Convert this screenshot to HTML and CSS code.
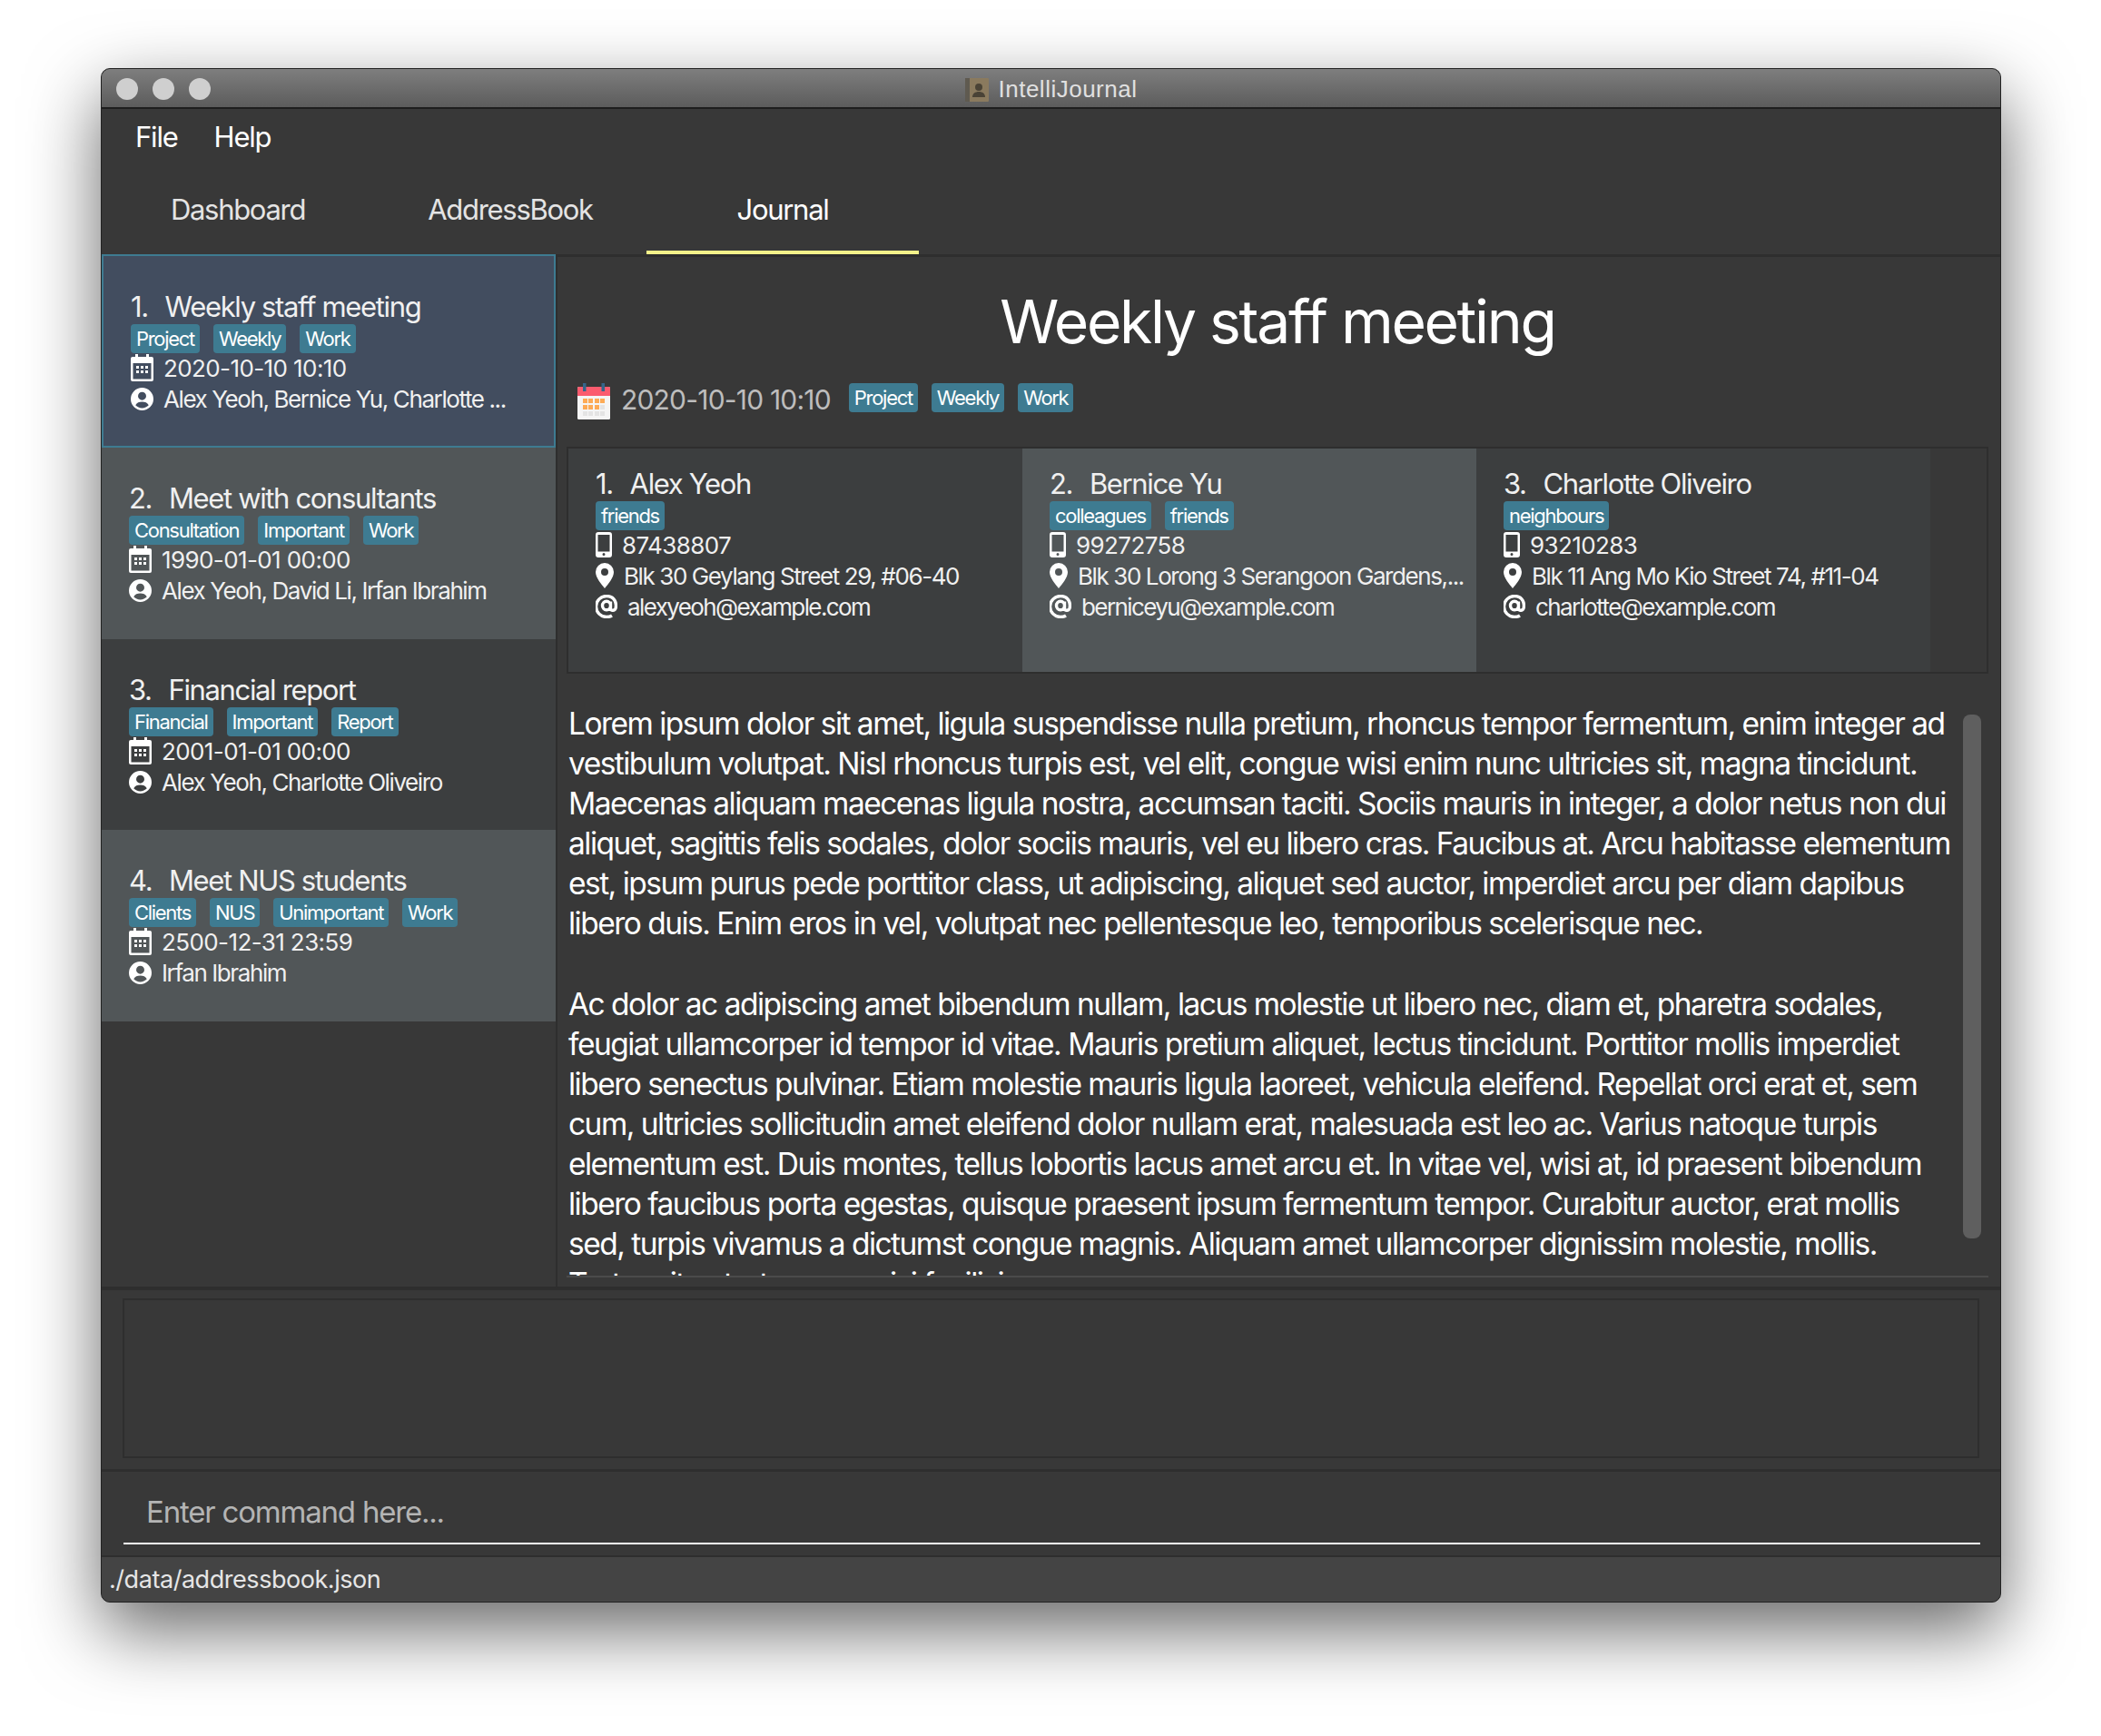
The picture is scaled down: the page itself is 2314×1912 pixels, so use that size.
FILE: index.html
```html
<!DOCTYPE html>
<html lang="en">
<head>
    <meta charset="utf-8">
    <title>IntelliJournal</title>
    <link rel="stylesheet" href="styles.css">
</head>
<body>
    <svg class="defs" width="0" height="0">
        <symbol id="i-cal" viewBox="0 0 25 30">
            <path fill-rule="evenodd" d="M5 0h3v3h9V0h3v3h3a2 2 0 0 1 2 2v23a2 2 0 0 1-2 2H2a2 2 0 0 1-2-2V5a2 2 0 0 1 2-2h3z M2.500 10v17.500h20V10z M6 13h3v3H6z M11 13h3v3h-3z M16 13h3v3h-3z M6 18h3v3H6z M11 18h3v3h-3z M16 18h3v3h-3z" fill="#fff"/>
        </symbol>
        <symbol id="i-user" viewBox="0 0 24 24">
            <path fill-rule="evenodd" fill="#fff" d="M12 0a12 12 0 1 0 0 24a12 12 0 1 0 0-24z M12 4.500a4.300 4.300 0 1 1 0 8.600a4.300 4.300 0 1 1 0-8.600z M5 18.500c1.500-2.600 3.800-3.600 7-3.600s5.500 1 7 3.600c-1.800 1.900-4.300 3-7 3s-5.200-1.100-7-3z"/>
        </symbol>
        <symbol id="i-phone" viewBox="0 0 18 28">
            <path fill-rule="evenodd" fill="#fff" d="M3 0h12a3 3 0 0 1 3 3v22a3 3 0 0 1-3 3H3a3 3 0 0 1-3-3V3a3 3 0 0 1 3-3z M2.500 3v18.500h13V3z M9 23a1.500 1.500 0 1 0 0 3a1.500 1.500 0 1 0 0-3z"/>
        </symbol>
        <symbol id="i-pin" viewBox="0 0 20 28">
            <path fill-rule="evenodd" fill="#fff" d="M10 0a10 10 0 0 1 10 10c0 6-6 13-10 18C6 23 0 16 0 10A10 10 0 0 1 10 0z M10 6a4 4 0 1 0 0 8a4 4 0 1 0 0-8z"/>
        </symbol>
        <symbol id="i-at" viewBox="0 0 24 26">
            <path fill="none" stroke="#fff" stroke-width="3.400" d="M16.500 7.500v8c0 2.500 4.500 2.500 5.500-.5c1.300-5-.5-13.500-10-13.500a11.300 11.300 0 0 0 0 23c2.500 0 4.500-.5 6-1.500 M16.500 12a4.500 4.800 0 1 1-9 0a4.500 4.800 0 1 1 9 0z"/>
        </symbol>
    </svg>

    <div class="window">
        <div class="titlebar">
            <div class="lights"><span></span><span></span><span></span></div>
            <div class="wintitle">
                <svg class="appicon" viewBox="0 0 26 26">
                    <rect width="26" height="26" rx="1" fill="#8a7a5e"/>
                    <rect width="5" height="26" fill="#5f5a50"/>
                    <circle cx="15" cy="10" r="4" fill="#4a4336"/>
                    <path d="M8 21c0-4 3-6 7-6s7 2 7 6z" fill="#4a4336"/>
                </svg>
                IntelliJournal
            </div>
        </div>

        <div class="menubar">
            <span>File</span>
            <span>Help</span>
        </div>

        <div class="tabs">
            <div class="tab">Dashboard</div>
            <div class="tab">AddressBook</div>
            <div class="tab active">Journal</div>
        </div>

        <div class="main">
            <div class="sidebar">
                <div class="card selected">
                    <div class="name"><span class="num">1.&nbsp;</span> Weekly staff meeting</div>
                    <div class="tags"><span class="tag">Project</span><span class="tag">Weekly</span><span class="tag">Work</span></div>
                    <div class="row digits"><svg class="ic cal"><use href="#i-cal"/></svg>2020-10-10 10:10</div>
                    <div class="row"><svg class="ic user"><use href="#i-user"/></svg>Alex Yeoh, Bernice Yu, Charlotte ...</div>
                </div>
                <div class="card even">
                    <div class="name"><span class="num">2.&nbsp;</span> Meet with consultants</div>
                    <div class="tags"><span class="tag">Consultation</span><span class="tag">Important</span><span class="tag">Work</span></div>
                    <div class="row digits"><svg class="ic cal"><use href="#i-cal"/></svg>1990-01-01 00:00</div>
                    <div class="row"><svg class="ic user"><use href="#i-user"/></svg>Alex Yeoh, David Li, Irfan Ibrahim</div>
                </div>
                <div class="card odd">
                    <div class="name"><span class="num">3.&nbsp;</span> Financial report</div>
                    <div class="tags"><span class="tag">Financial</span><span class="tag">Important</span><span class="tag">Report</span></div>
                    <div class="row digits"><svg class="ic cal"><use href="#i-cal"/></svg>2001-01-01 00:00</div>
                    <div class="row"><svg class="ic user"><use href="#i-user"/></svg>Alex Yeoh, Charlotte Oliveiro</div>
                </div>
                <div class="card even">
                    <div class="name"><span class="num">4.&nbsp;</span> Meet NUS students</div>
                    <div class="tags"><span class="tag">Clients</span><span class="tag">NUS</span><span class="tag">Unimportant</span><span class="tag">Work</span></div>
                    <div class="row digits"><svg class="ic cal"><use href="#i-cal"/></svg>2500-12-31 23:59</div>
                    <div class="row"><svg class="ic user"><use href="#i-user"/></svg>Irfan Ibrahim</div>
                </div>
            </div>

            <div class="detail">
                <h1>Weekly staff meeting</h1>
                <div class="dateline">
                    <svg class="bigcal" viewBox="0 0 36 40">
                        <rect y="4" width="36" height="36" rx="1.500" fill="#f5f5f5"/>
                        <path d="M0 14V5.500A1.500 1.500 0 0 1 1.500 4h33A1.500 1.500 0 0 1 36 5.500V14z" fill="#fb5b6e"/>
                        <rect x="6" width="3.500" height="9" fill="#34658a"/>
                        <rect x="26.500" width="3.500" height="9" fill="#34658a"/>
                        <g fill="#fdab56">
                            <rect x="6" y="17" width="5" height="5"/><rect x="12" y="17" width="5" height="5"/><rect x="19" y="17" width="5" height="5"/><rect x="25" y="17" width="5" height="5"/>
                            <rect x="6" y="24" width="5" height="5"/><rect x="12" y="24" width="5" height="5"/><rect x="19" y="24" width="5" height="5"/>
                        </g>
                        <g fill="#e4e4e4">
                            <rect x="25" y="24" width="5" height="5"/>
                            <rect x="6" y="31" width="5" height="5"/><rect x="12" y="31" width="5" height="5"/><rect x="19" y="31" width="5" height="5"/><rect x="25" y="31" width="5" height="5"/>
                        </g>
                    </svg>
                    <span class="bigdate">2020-10-10 10:10</span>
                    <div class="tags"><span class="tag">Project</span><span class="tag">Weekly</span><span class="tag">Work</span></div>
                </div>

                <div class="people">
                    <div class="person">
                        <div class="name"><span class="num">1.&nbsp;</span> Alex Yeoh</div>
                        <div class="tags"><span class="tag">friends</span></div>
                        <div class="row digits"><svg class="ic phone"><use href="#i-phone"/></svg>87438807</div>
                        <div class="row"><svg class="ic pin"><use href="#i-pin"/></svg>Blk 30 Geylang Street 29, #06-40</div>
                        <div class="row email"><svg class="ic at"><use href="#i-at"/></svg>alexyeoh@example.com</div>
                    </div>
                    <div class="person even">
                        <div class="name"><span class="num">2.&nbsp;</span> Bernice Yu</div>
                        <div class="tags"><span class="tag">colleagues</span><span class="tag">friends</span></div>
                        <div class="row digits"><svg class="ic phone"><use href="#i-phone"/></svg>99272758</div>
                        <div class="row"><svg class="ic pin"><use href="#i-pin"/></svg>Blk 30 Lorong 3 Serangoon Gardens,...</div>
                        <div class="row email"><svg class="ic at"><use href="#i-at"/></svg>berniceyu@example.com</div>
                    </div>
                    <div class="person">
                        <div class="name"><span class="num">3.&nbsp;</span> Charlotte Oliveiro</div>
                        <div class="tags"><span class="tag">neighbours</span></div>
                        <div class="row digits"><svg class="ic phone"><use href="#i-phone"/></svg>93210283</div>
                        <div class="row"><svg class="ic pin"><use href="#i-pin"/></svg>Blk 11 Ang Mo Kio Street 74, #11-04</div>
                        <div class="row email"><svg class="ic at"><use href="#i-at"/></svg>charlotte@example.com</div>
                    </div>
                </div>

                <div class="notes">
                    <p>Lorem ipsum dolor sit amet, ligula suspendisse nulla pretium, rhoncus tempor fermentum, enim integer ad<br>
                    vestibulum volutpat. Nisl rhoncus turpis est, vel elit, congue wisi enim nunc ultricies sit, magna tincidunt.<br>
                    Maecenas aliquam maecenas ligula nostra, accumsan taciti. Sociis mauris in integer, a dolor netus non dui<br>
                    aliquet, sagittis felis sodales, dolor sociis mauris, vel eu libero cras. Faucibus at. Arcu habitasse elementum<br>
                    est, ipsum purus pede porttitor class, ut adipiscing, aliquet sed auctor, imperdiet arcu per diam dapibus<br>
                    libero duis. Enim eros in vel, volutpat nec pellentesque leo, temporibus scelerisque nec.</p>
                    <p>Ac dolor ac adipiscing amet bibendum nullam, lacus molestie ut libero nec, diam et, pharetra sodales,<br>
                    feugiat ullamcorper id tempor id vitae. Mauris pretium aliquet, lectus tincidunt. Porttitor mollis imperdiet<br>
                    libero senectus pulvinar. Etiam molestie mauris ligula laoreet, vehicula eleifend. Repellat orci erat et, sem<br>
                    cum, ultricies sollicitudin amet eleifend dolor nullam erat, malesuada est leo ac. Varius natoque turpis<br>
                    elementum est. Duis montes, tellus lobortis lacus amet arcu et. In vitae vel, wisi at, id praesent bibendum<br>
                    libero faucibus porta egestas, quisque praesent ipsum fermentum tempor. Curabitur auctor, erat mollis<br>
                    sed, turpis vivamus a dictumst congue magnis. Aliquam amet ullamcorper dignissim molestie, mollis.<br>
                    Tortor vitae tortor eros wisi facilisis.</p>
                    <div class="thumb"></div>
                </div>
            </div>
        </div>

        <div class="log"><div class="logbox"></div></div>

        <div class="command">
            <div class="cmdinput">Enter command here...</div>
        </div>

        <div class="status">./data/addressbook.json</div>
    </div>
</body>
</html>
```

FILE: styles.css
```css
* {
    box-sizing: border-box;
}
html, body {
    height: 100%;
}
body {
    margin: 0;
    padding: 75px 111px 0;
    background-color: #fff;
    font-family: Inter, "Liberation Sans", sans-serif;
    color: #fff;
    overflow: hidden;
}
.defs {
    position: absolute;
}
.window {
    width: 2093px;
    height: 1690px;
    display: flex;
    flex-direction: column;
    background-color: #383838;
    border: 1px solid #222;
    border-radius: 10px;
    box-shadow: 0 30px 80px rgba(0, 0, 0, 0.6);
    overflow: hidden;
}
.titlebar {
    height: 44px;
    flex: none;
    display: flex;
    align-items: center;
    justify-content: center;
    position: relative;
    background: linear-gradient(#7e7e7e, #5c5c5c);
    border-bottom: 2px solid #1e1e1e;
}
.lights {
    position: absolute;
    left: 16px;
    top: 10px;
    display: flex;
    gap: 16px;
}
.lights span {
    width: 24px;
    height: 24px;
    border-radius: 50%;
    background-color: #cfcfcf;
}
.wintitle {
    display: flex;
    align-items: center;
    gap: 11px;
    margin-top: 3px;
    font-family: "Liberation Sans", sans-serif;
    font-size: 26px;
    letter-spacing: 0.5px;
    color: #e0e0e0;
}
.appicon {
    width: 26px;
    height: 26px;
}
.menubar {
    height: 62px;
    flex: none;
    display: flex;
    align-items: center;
    gap: 40px;
    padding: 0 0 2px 37px;
    font-size: 31px;
    letter-spacing: -1.2px;
}
.tabs {
    height: 98px;
    flex: none;
    display: flex;
}
.tab {
    width: 300px;
    display: flex;
    align-items: center;
    justify-content: center;
    padding-bottom: 1px;
    font-size: 31px;
    letter-spacing: -1.3px;
    color: #e4e4e4;
}
.tab.active {
    color: #fff;
    box-shadow: inset 0 -4px 0 #f4f28a;
}
.main {
    flex: 1;
    min-height: 0;
    display: flex;
}
.sidebar {
    width: 500px;
    flex: none;
}
.card {
    height: 211px;
    padding: 36px 0 0 30px;
}
.card.selected {
    height: 213px;
    background-color: #424d5f;
    border: 2px solid #3e7b91;
}
.card.even {
    background-color: #515658;
}
.card.odd {
    height: 210px;
    background-color: #3c3e3f;
}
.name {
    height: 39px;
    line-height: 39px;
    font-size: 31px;
    letter-spacing: -1.35px;
    color: #f0f0f0;
    white-space: nowrap;
}
.num {
    margin-right: 4px;
}
.tags {
    display: flex;
    gap: 15px;
    margin-bottom: -1px;
}
.tag {
    height: 32px;
    line-height: 32px;
    padding: 0 6px;
    border-radius: 4px;
    background-color: #3e7b91;
    font-size: 22px;
    letter-spacing: -1.3px;
    white-space: nowrap;
}
.row {
    height: 34px;
    display: flex;
    align-items: center;
    font-size: 26px;
    letter-spacing: -1.4px;
    color: #f0f0f0;
    white-space: nowrap;
}
.row.digits {
    letter-spacing: -0.6px;
}
.row.email {
    letter-spacing: -1.6px;
}
.ic {
    flex: none;
    margin-right: 11px;
}
.ic.cal {
    width: 25px;
    height: 30px;
}
.ic.user {
    width: 25px;
    height: 25px;
}
.ic.phone {
    width: 18px;
    height: 28px;
}
.ic.pin {
    width: 20px;
    height: 28px;
}
.ic.at {
    width: 24px;
    height: 26px;
}
.detail {
    flex: 1;
    min-width: 0;
    padding: 0 13px 0 10px;
    border-left: 2px solid #2e2e2e;
    border-top: 3px solid #2e2e2e;
}
h1 {
    margin: 29px 0 0;
    height: 84px;
    line-height: 84px;
    text-align: center;
    font-size: 66px;
    font-weight: 400;
    letter-spacing: -2.3px;
}
.dateline {
    display: flex;
    align-items: flex-start;
    height: 70px;
    margin-top: 26px;
    margin-left: 12px;
}
.bigcal {
    width: 36px;
    height: 40px;
    margin-right: 12px;
}
.bigdate {
    margin-right: 20px;
    font-size: 30px;
    letter-spacing: -0.8px;
    color: #bdbdbd;
}
.people {
    height: 250px;
    display: flex;
    border: 2px solid #2e2e2e;
}
.person {
    width: 500px;
    padding: 19px 0 0 30px;
    background-color: #3c3e3f;
}
.person.even {
    background-color: #515658;
}
.notes {
    position: relative;
    height: 656px;
    margin-top: 9px;
    padding-top: 24px;
    padding-left: 2px;
    overflow: hidden;
    border-bottom: 2px solid #4b4b4b;
    font-size: 33.500px;
    line-height: 44.1px;
    letter-spacing: -1.52px;
    white-space: nowrap;
}
.notes p {
    margin: 0 0 44.1px;
}
.thumb {
    position: absolute;
    right: 8px;
    top: 36px;
    width: 20px;
    height: 577px;
    border-radius: 8px;
    background-color: #5f5f5f;
}
.log {
    flex: none;
    height: 201px;
    padding: 9px 23px 12px 23px;
    border-top: 4px solid #2e2e2e;
}
.logbox {
    height: 100%;
    border: 2px solid #2e2e2e;
}
.command {
    flex: none;
    height: 95px;
    padding: 0 22px 0 24px;
    border-top: 3px solid #2e2e2e;
}
.cmdinput {
    height: 80px;
    padding: 15px 0 0 25px;
    line-height: 58px;
    font-size: 33px;
    letter-spacing: -1.2px;
    color: #b4b4b4;
    border-bottom: 2px solid #fff;
}
.status {
    flex: none;
    height: 51px;
    padding-left: 8px;
    line-height: 50px;
    background-color: #444;
    border-top: 2px solid #2e2e2e;
    font-size: 27px;
    letter-spacing: -0.45px;
    color: #e6e6e6;
}
```
